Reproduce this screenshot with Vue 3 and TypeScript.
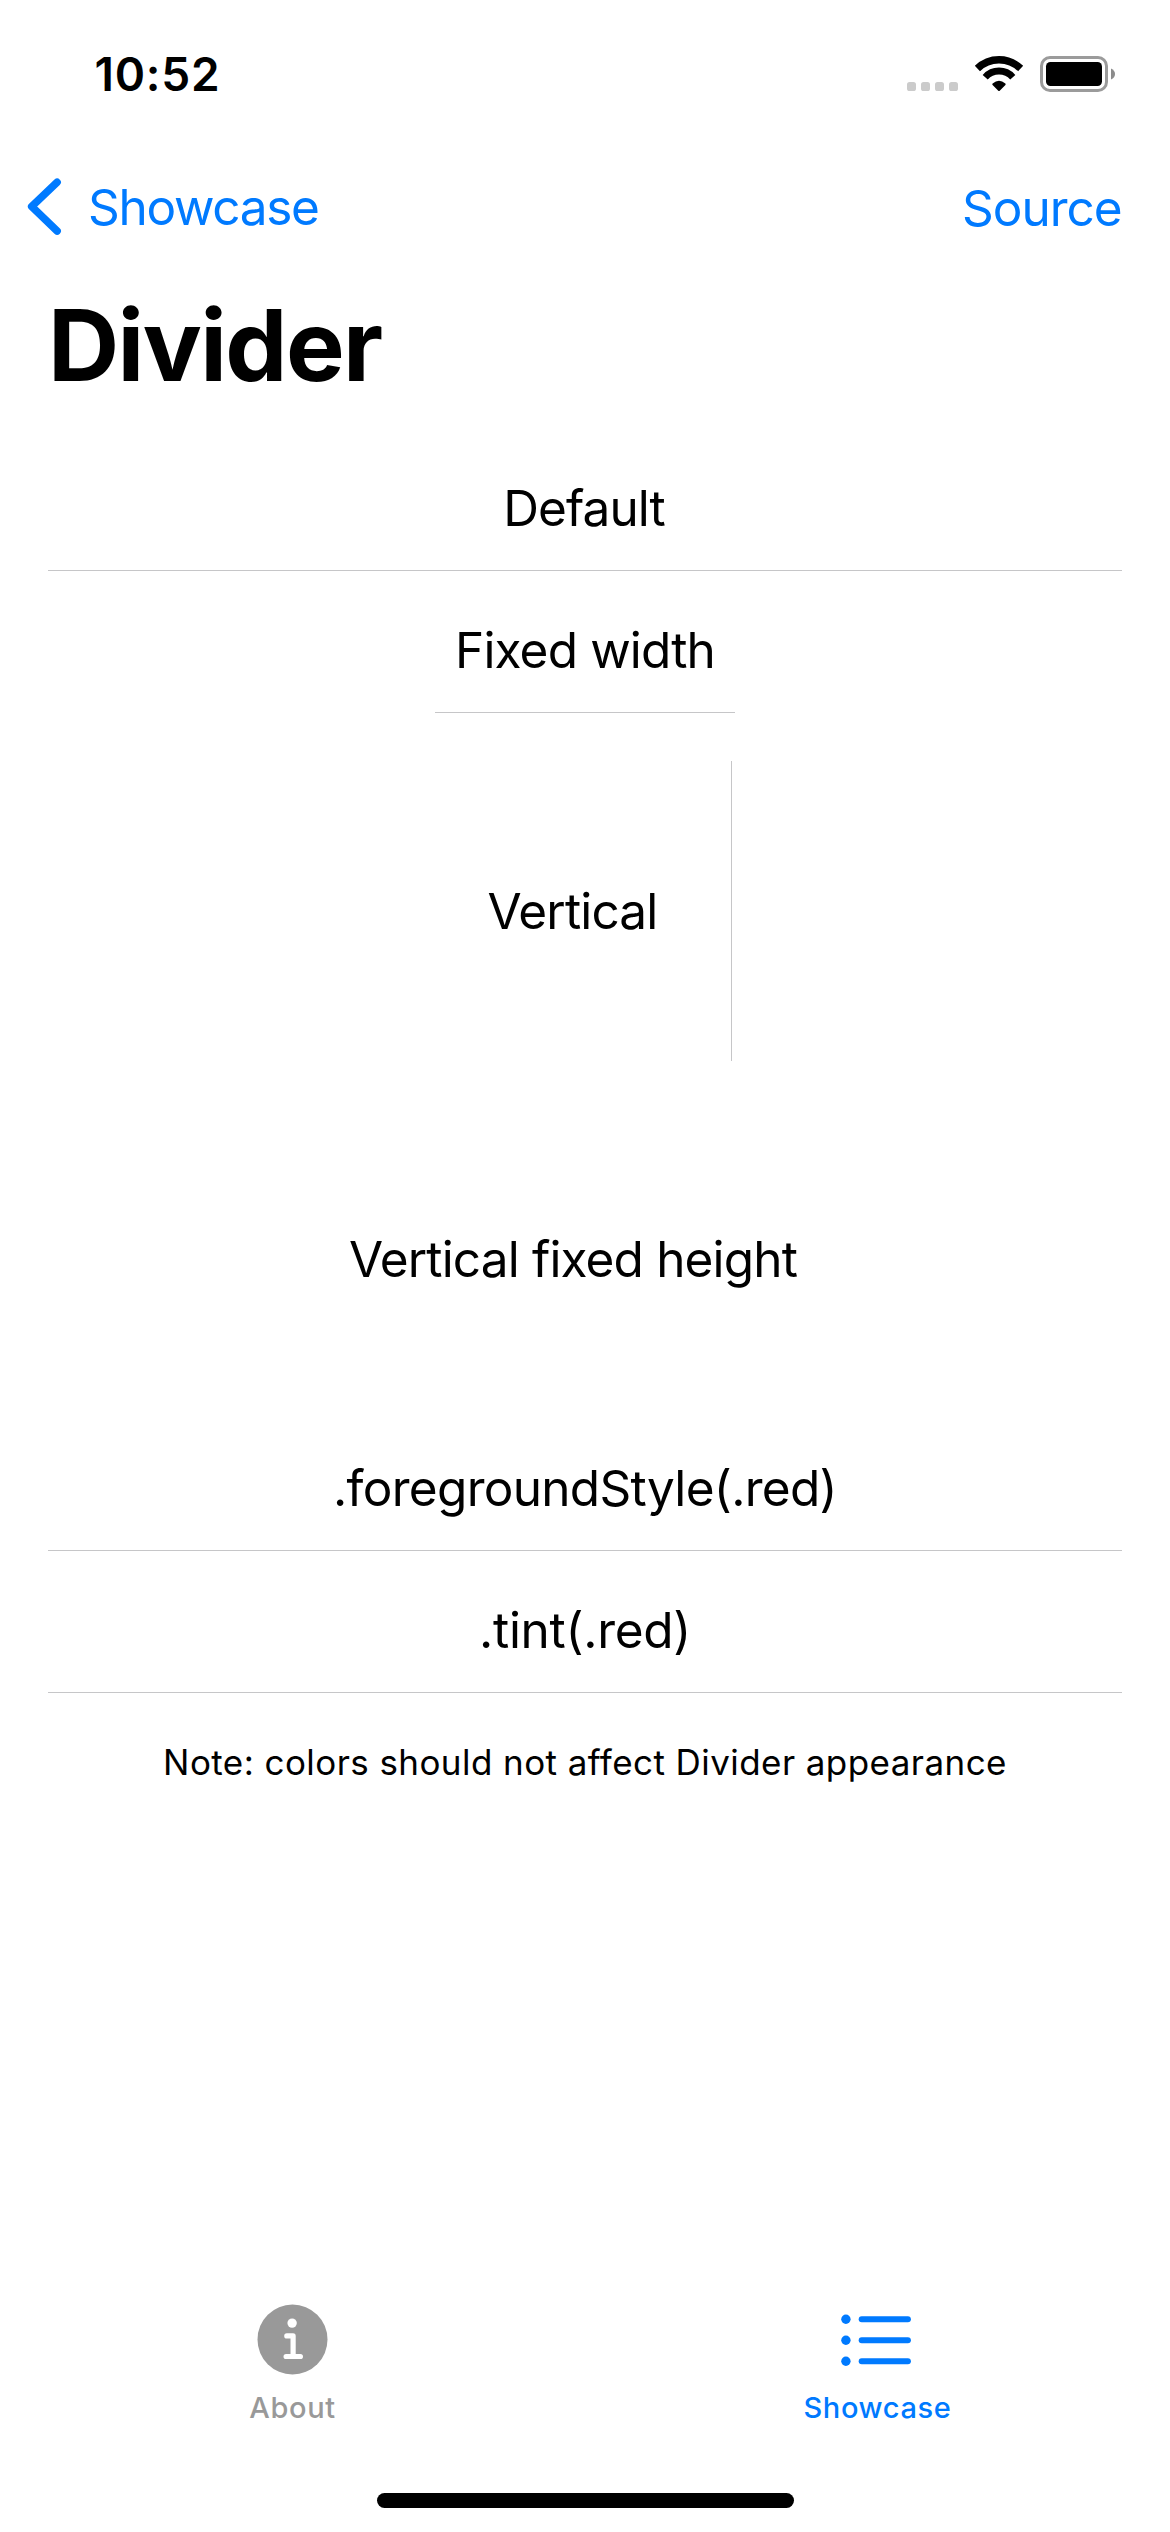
<script setup lang="ts">
const signalDots = [0, 14, 28, 42]
const listRows = [7, 28, 49]
</script>

<template>
  <div class="screen">
    <header class="status">
      <span class="time">10:52</span>
      <svg class="status-icons" width="216" height="44" viewBox="904 52 216 44">
        <rect v-for="d in signalDots" :key="d" :x="907 + d" y="82" width="9" height="9" rx="2.6" fill="#cbcbcb" />
        <g fill="none" stroke="#000">
          <path d="M977.4 68.5A31 31 0 0 1 1020.6 68.5" stroke-width="7.4" />
          <path d="M985.2 77.2A18.5 18.5 0 0 1 1012.8 77.2" stroke-width="6.8" />
        </g>
        <path d="M999 90L993.3 84.2Q999 79.2 1004.7 84.2Z" stroke="#000" stroke-width="2" stroke-linejoin="round" />
        <rect x="1041.5" y="57.5" width="65" height="33" rx="8.5" fill="none" stroke="#9b9b9b" stroke-width="3" />
        <rect x="1046" y="62" width="56" height="24" rx="4.5" />
        <path d="M1111 68.5Q1115 70.5 1115 74T1111 79.5Z" fill="#8c8c8c" />
      </svg>
    </header>

    <nav class="nav">
      <a class="back">
        <svg width="36" height="62" viewBox="26 176 36 62">
          <path d="M57.1 182.3L31.7 206.6L57.1 231" fill="none" stroke="#007aff" stroke-width="7.6" stroke-linecap="round" stroke-linejoin="round" />
        </svg>
        <span class="back-label">Showcase</span>
      </a>
      <a class="source">Source</a>
    </nav>

    <h1 class="title">Divider</h1>

    <main class="content">
      <section class="item">
        <p class="label default">Default</p>
        <div class="line"></div>
      </section>
      <section class="item">
        <p class="label fixed">Fixed width</p>
        <div class="line short"></div>
      </section>
      <section class="vertical">
        <p class="label">Vertical</p>
      </section>
      <section class="vertical-fixed">
        <p class="label">Vertical fixed height</p>
      </section>
      <section class="item">
        <p class="label foreground">.foregroundStyle(.red)</p>
        <div class="line"></div>
      </section>
      <section class="item">
        <p class="label tint">.tint(.red)</p>
        <div class="line"></div>
      </section>
      <p class="note">Note: colors should not affect Divider appearance</p>
    </main>

    <footer class="tabs">
      <a class="tab">
        <svg width="71" height="72" viewBox="256.5 2303.5 71 72">
          <circle cx="292" cy="2339" r="35" fill="#999" />
          <circle cx="291.6" cy="2322.6" r="4.7" fill="#fff" />
          <path d="M286.3 2335.4H292.6V2356M285.6 2356H299.9" fill="none" stroke="#fff" stroke-width="5.2" stroke-linecap="round" stroke-linejoin="round" />
        </svg>
        <span>About</span>
      </a>
      <a class="tab active">
        <svg width="74" height="72" viewBox="840.5 2303.5 74 72">
          <g transform="translate(840 2311.7)" fill="#007aff">
            <template v-for="y in listRows" :key="y">
              <circle cx="5.4" :cy="y" r="4.7" />
              <rect x="18.2" :y="y - 3" width="52.2" height="6" rx="3" />
            </template>
          </g>
        </svg>
        <span>Showcase</span>
      </a>
    </footer>
    <div class="home"></div>
  </div>
</template>

<style>
body {
  margin: 0;
  background: #fff;
}
</style>

<style scoped>
.screen {
  display: flex;
  flex-direction: column;
  width: 1170px;
  height: 2532px;
  overflow: hidden;
  background: #fff;
  color: #000;
  font-family: Inter, "Liberation Sans", sans-serif;
}
p,
h1 {
  margin: 0;
}
.status {
  display: flex;
  justify-content: space-between;
  box-sizing: border-box;
  height: 140px;
  padding: 44px 50px 0 94.5px;
}
.time {
  font-size: 46px;
  font-weight: 600;
  line-height: 60px;
  letter-spacing: 0.78px;
}
.status-icons {
  margin-top: 8px;
}
.nav {
  display: flex;
  justify-content: space-between;
  align-items: flex-start;
  box-sizing: border-box;
  height: 132px;
  padding: 36px 48.4px 0 26px;
  color: #007aff;
  font-size: 49.5px;
  line-height: 60px;
}
.back {
  display: flex;
  gap: 26px;
}
.back-label {
  margin-top: 1px;
  letter-spacing: -1.3px;
}
.source {
  margin-top: 2px;
  letter-spacing: -1.02px;
}
.title {
  margin: 13px 0 0 48px;
  font-size: 98.6px;
  font-weight: 700;
  line-height: 120px;
  height: 120px;
  letter-spacing: -1.6px;
}
.content {
  display: flex;
  flex-direction: column;
  gap: 49px;
  margin: 73px 48px 0;
}
.label {
  font-size: 49.5px;
  line-height: 60px;
  letter-spacing: -0.84px;
  text-align: center;
  white-space: nowrap;
}
.item {
  display: flex;
  flex-direction: column;
  gap: 32px;
}
.line {
  height: 1px;
  background: #c6c6c8;
}
.line.short {
  width: 300px;
  align-self: center;
}
.default {
  padding-right: 2px;
  letter-spacing: -0.93px;
}
.foreground {
  letter-spacing: -0.7px;
}
.tint {
  letter-spacing: -0.3px;
}
.vertical {
  display: flex;
  flex-direction: column;
  justify-content: center;
  width: 317px;
  height: 300px;
  margin: -1px 0 0 366px;
  border-right: 1px solid #c6c6c8;
}
.vertical-fixed {
  display: flex;
  flex-direction: column;
  justify-content: center;
  width: 1050px;
  height: 300px;
  margin-top: -1px;
}
.note {
  margin-top: -2px;
  font-size: 35px;
  line-height: 44px;
  letter-spacing: 0.43px;
  text-align: center;
}
.tabs {
  display: flex;
  margin-top: auto;
}
.tab {
  display: flex;
  flex: 1;
  flex-direction: column;
  align-items: center;
  gap: 12px;
  height: 189.5px;
  color: #999;
  font-size: 29px;
  font-weight: 500;
  line-height: 40px;
  letter-spacing: 0.65px;
}
.tab.active {
  color: #007aff;
}
.home {
  width: 417px;
  height: 15px;
  margin: 0 auto 24px;
  border-radius: 8px;
  background: #000;
}
</style>
